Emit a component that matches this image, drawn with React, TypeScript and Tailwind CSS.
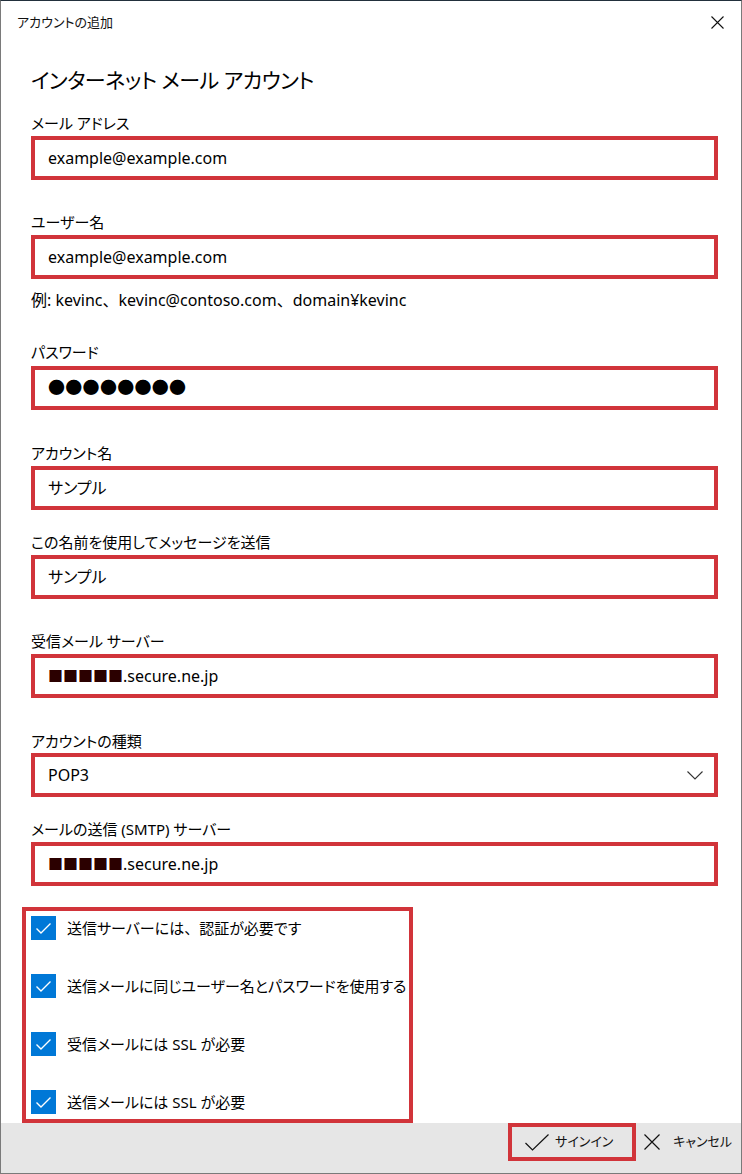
import React from "react";

// 入力ボックス（赤枠で強調）
function Box({
  children,
  className,
  right,
}: {
  children: React.ReactNode;
  className: string;
  right?: React.ReactNode;
}) {
  return (
    <div
      className={`flex h-[44px] w-[687px] items-center border-4 border-[#d1343a] bg-white pl-[13px] pr-[10px] text-[16px] text-black ${className}`}
    >
      <div className="flex-1 whitespace-nowrap">{children}</div>
      {right}
    </div>
  );
}

function Label({ text, className }: { text: string; className: string }) {
  return (
    <div className={`h-[20px] text-[15px] leading-[20px] text-black ${className}`}>{text}</div>
  );
}

// 全角の読点（palt を切る）
function Comma() {
  return <span className="[font-feature-settings:normal]">、</span>;
}

function Masked() {
  return (
    <>
      <span className="text-[15px] text-[#2b0000]">■■■■■</span>
      <span>.secure.ne.jp</span>
    </>
  );
}

function CheckRow({ children }: { children: React.ReactNode }) {
  return (
    <div className="flex h-[24px] items-center">
      <div className="flex h-[24px] w-[25px] items-center justify-center bg-[#0078d7]">
        <svg width="25" height="24" viewBox="0 0 25 24">
          <path d="M5.5 12.5 L10 17 L19.5 7.5" fill="none" stroke="white" strokeWidth="1.4" />
        </svg>
      </div>
      <span className="ml-[11px] text-[15px] text-black">{children}</span>
    </div>
  );
}

export default function App() {
  return (
    <div
      className="box-border flex h-[1174px] w-[742px] flex-col border border-t-[#22303c] border-r-[#7a7a7a] border-b-[#7a7a7a] border-l-[#7a7a7a] bg-white [font-feature-settings:'palt'] text-black"
      style={{ fontFamily: '"Noto Sans", "Noto Sans CJK JP", sans-serif' }}
    >
      {/* タイトルバー */}
      <div className="flex h-[43px] items-center justify-between pl-[16px] pr-[17px]">
        <span className="text-[13px] text-[#111]">アカウントの追加</span>
        <svg width="13" height="13" viewBox="0 0 13 13">
          <path d="M0.5 0.5 L12.5 12.5 M12.5 0.5 L0.5 12.5" stroke="#111" strokeWidth="1.1" />
        </svg>
      </div>

      <div className="flex flex-col pl-[30px]">
        <div className="mt-[21px] h-[30px] text-[21px] leading-[30px] tracking-[-0.5px]">
          インターネット メール アカウント
        </div>

        <Label text="メール アドレス" className="mt-[18px]" />
        <Box className="mt-[3px]">example@example.com</Box>

        <Label text="ユーザー名" className="mt-[32px]" />
        <Box className="mt-[3px]">example@example.com</Box>
        <div className="mt-[11px] h-[20px] text-[16px] leading-[20px]">
          例: kevinc<Comma />kevinc@contoso.com<Comma />domain¥kevinc
        </div>

        <Label text="パスワード" className="mt-[32px]" />
        <Box className="mt-[4px]">
          <span className="text-[17px] tracking-[0.3px]">●●●●●●●●</span>
        </Box>

        <Label text="アカウント名" className="mt-[33px]" />
        <Box className="mt-[3px]">サンプル</Box>

        <Label text="この名前を使用してメッセージを送信" className="mt-[22px]" />
        <Box className="mt-[3px]">サンプル</Box>

        <Label text="受信メール サーバー" className="mt-[32px]" />
        <Box className="mt-[3px]">
          <Masked />
        </Box>

        <Label text="アカウントの種類" className="mt-[33px]" />
        <Box
          className="mt-[2px]"
          right={
            <svg width="16" height="9" viewBox="0 0 16 9" className="mr-[1px]">
              <path d="M0.5 0.5 L8 8 L15.5 0.5" fill="none" stroke="#333" strokeWidth="1.1" />
            </svg>
          }
        >
          POP3
        </Box>

        <Label text="メールの送信 (SMTP) サーバー" className="mt-[22px]" />
        <Box className="mt-[3px]">
          <Masked />
        </Box>

        {/* チェックボックス群 */}
        <div className="-ml-[9px] mt-[21px] flex h-[216px] w-[391px] flex-col gap-[34px] border-4 border-[#d1343a] pl-[5px] pt-[5px]">
          <CheckRow>
            送信サーバーには<Comma />認証が必要です
          </CheckRow>
          <CheckRow>送信メールに同じユーザー名とパスワードを使用する</CheckRow>
          <CheckRow>受信メールには SSL が必要</CheckRow>
          <CheckRow>送信メールには SSL が必要</CheckRow>
        </div>
      </div>

      {/* フッター */}
      <div className="flex h-[50px] items-start justify-end bg-[#e6e6e6] pr-[9px]">
        <div className="flex h-[38px] w-[128px] items-center border-4 border-[#d1343a] pl-[13px]">
          <svg width="24" height="17" viewBox="0 0 24 17">
            <path d="M0.5 9 L7.5 16 L23.5 0.5" fill="none" stroke="#111" strokeWidth="1.2" />
          </svg>
          <span className="ml-[6px] text-[13px] text-[#111]">サインイン</span>
        </div>
        <div className="ml-[8px] flex h-[38px] items-center">
          <svg width="16" height="16" viewBox="0 0 16 16">
            <path d="M0.5 0.5 L15.5 15.5 M15.5 0.5 L0.5 15.5" stroke="#111" strokeWidth="1.2" />
          </svg>
          <span className="ml-[13px] text-[13px] text-[#111]">キャンセル</span>
        </div>
      </div>
    </div>
  );
}
